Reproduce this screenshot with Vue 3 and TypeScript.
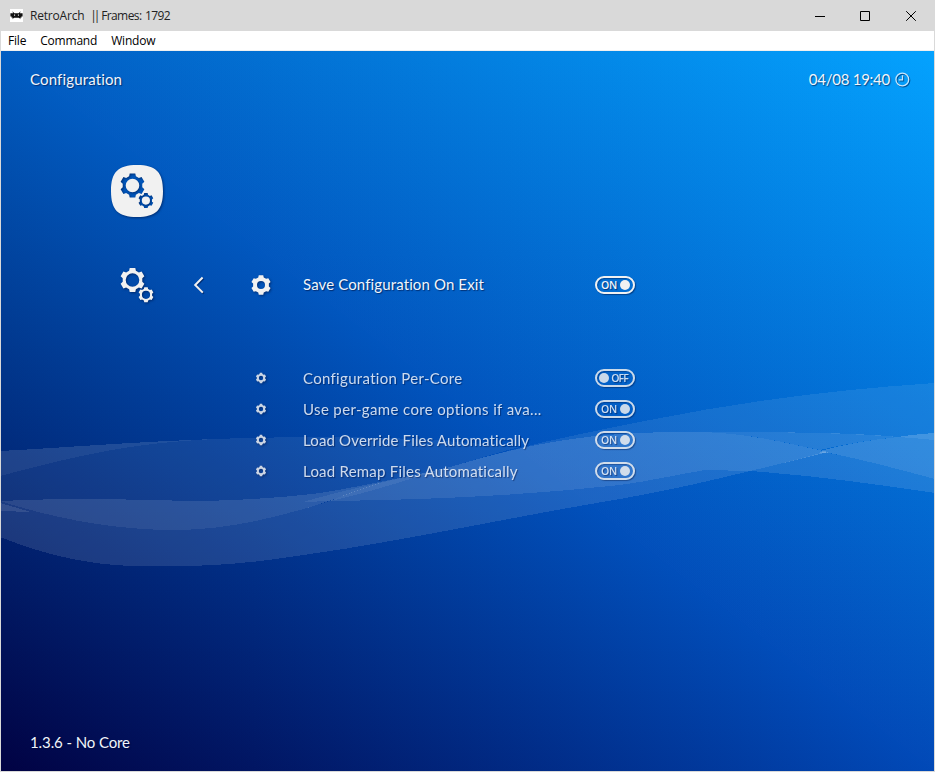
<script setup lang="ts">
interface Setting {
  label: string
  on: boolean
  active?: boolean
  fit: string
}

interface Wave {
  d: string
  alpha: number
}

const menus: string[] = ['File', 'Command', 'Window']

const settings: Setting[] = [
  { label: 'Save Configuration On Exit', on: true, active: true, fit: 'fit-save' },
  { label: 'Configuration Per-Core', on: false, fit: 'fit-core' },
  { label: 'Use per-game core options if ava...', on: true, fit: 'fit-game' },
  { label: 'Load Override Files Automatically', on: true, fit: 'fit-override' },
  { label: 'Load Remap Files Automatically', on: true, fit: 'fit-remap' },
]

/* Six-toothed cog with a round hole, drawn with the even-odd rule. */
function gear(cx: number, cy: number, outer: number, hole: number): string {
  const root = outer * 0.8
  const pts: string[] = []
  for (let i = 0; i < 6; i++) {
    const mid = -90 + i * 60
    const corners: [number, number][] = [
      [mid - 20, root],
      [mid - 13, outer],
      [mid + 13, outer],
      [mid + 20, root],
    ]
    for (const [deg, r] of corners) {
      const a = (deg * Math.PI) / 180
      pts.push(`${(cx + r * Math.cos(a)).toFixed(2)} ${(cy + r * Math.sin(a)).toFixed(2)}`)
    }
  }
  const ring = `M${cx - hole} ${cy}a${hole} ${hole} 0 1 0 ${hole * 2} 0a${hole} ${hole} 0 1 0 ${-hole * 2} 0Z`
  return `M${pts.join('L')}Z${ring}`
}

const tile =
  'M27 1C46 1 53 8 53 27C53 46 46 53 27 53C8 53 1 46 1 27C1 8 8 1 27 1Z'

/* Ribbon pieces, in window coordinates. */
const waves: Wave[] = [
  { alpha: 0.12, d: 'M0 451C60 448 130 442 215 439C130 443 80 455 0 476Z' },
  {
    alpha: 0.07,
    d: 'M0 476C80 455 130 443 215 439C300 436 400 436 470 443C500 446 510 448 520 447C495 453 475 460 450 467C430 472 410 476 390 480C370 484 345 489 320 493C280 498 230 501 190 501C120 499 60 498 0 501Z',
  },
  {
    alpha: 0.17,
    d: 'M0 501C60 498 120 499 190 501C230 501 280 498 320 493C345 489 370 484 390 480C350 492 330 502 300 510C260 521 220 530 175 530C110 530 50 517 0 501Z',
  },
  { alpha: 0.1, d: 'M0 503L31 512L0 511Z' },
  {
    alpha: 0.11,
    d: 'M0 501C50 517 110 530 175 530C220 530 260 521 300 510C310 507 320 504 330 501C430 500 530 495 620 485C650 481 680 474 705 470L750 471C700 483 680 488 620 499C500 519 400 542 290 557C230 566 190 567 130 566C90 564 50 557 0 537Z',
  },
  {
    alpha: 0.19,
    d: 'M330 501C350 492 370 486 390 480C410 476 430 472 450 467C510 449 560 438 620 434C650 432 675 432 700 432C750 433 790 444 828 452C800 459 780 464 750 471L705 470C680 474 650 481 620 485C530 495 430 500 330 501Z',
  },
  { alpha: 0.07, d: 'M303 502C340 491 380 483 450 467C400 482 360 495 330 501Z' },
  {
    alpha: 0.08,
    d: 'M450 467C530 443 590 432 650 420C740 402 830 390 935 383L935 440C860 433 800 432 700 432C675 432 650 432 620 434C560 438 510 449 450 467Z',
  },
  { alpha: 0.14, d: 'M700 432C800 432 860 433 898 437C870 440 850 443 820 450C790 444 750 433 700 432Z' },
  { alpha: 0.19, d: 'M820 451C845 444 870 440 898 437C910 435 920 434 935 433L935 479C890 467 860 459 820 451Z' },
  {
    alpha: 0.11,
    d: 'M750 471C780 464 800 459 824 452C860 459 890 467 935 479L935 493C880 485 820 476 750 471Z',
  },
]
</script>

<template>
  <div class="window">
    <header class="titlebar">
      <svg class="app-icon" width="13" height="13" viewBox="0 0 13 13">
        <rect width="13" height="13" fill="#fff" />
        <path
          d="M2.3 2.3L4.4 4.2H8.6L10.7 2.3L9.9 4.3H12.6V7.5H11.4V8.7H9.9L11 10.2L8.7 8.8H4.3L2 10.2L3.1 8.7H1.6V7.5H.4V4.3H3.1Z"
          fill="#111"
        />
        <path d="M4 5.6h1.1v1.1H4zM7.9 5.6h1.1v1.1H7.9z" fill="#ddd" />
      </svg>
      <span>RetroArch</span>
      <span class="title-bars">||</span>
      <span class="title-frames">Frames: 1792</span>
      <div class="controls">
        <svg width="10" height="10" viewBox="0 0 10 10"><path d="M0 5.5H10" /></svg>
        <svg width="10" height="10" viewBox="0 0 10 10"><path d="M.5 .5H9.5V9.5H.5Z" /></svg>
        <svg width="10" height="10" viewBox="0 0 10 10"><path d="M.2 .2L9.8 9.8M9.8 .2L.2 9.8" /></svg>
      </div>
    </header>

    <nav class="menubar">
      <span v-for="menu in menus" :key="menu">{{ menu }}</span>
    </nav>

    <section class="screen">
      <svg class="backdrop" width="933" height="720" viewBox="1 51 933 720">
        <defs>
          <linearGradient id="lowX" x1="0" y1="0" x2="1" y2="0">
            <stop offset="0" stop-color="#000" />
            <stop offset="1" stop-color="rgb(0,71,116)" />
          </linearGradient>
          <linearGradient id="lowY" x1="0" y1="1" x2="0" y2="0">
            <stop offset="0" stop-color="#000" />
            <stop offset="1" stop-color="rgb(0,91,127)" />
          </linearGradient>
          <linearGradient id="highX" x1="0" y1="0" x2="1" y2="0">
            <stop offset="0" stop-color="#000" />
            <stop offset="1" stop-color="rgb(2,69,60)" />
          </linearGradient>
          <linearGradient id="highY" x1="0" y1="1" x2="0" y2="0">
            <stop offset="0" stop-color="#000" />
            <stop offset="1" stop-color="rgb(2,89,71)" />
          </linearGradient>
          <clipPath id="upper"><path d="M1 51H934V771Z" /></clipPath>
        </defs>
        <g class="blend">
          <rect x="1" y="51" width="933" height="720" fill="rgb(1,2,67)" />
          <rect class="add" x="1" y="51" width="933" height="720" fill="url(#lowX)" />
          <rect class="add" x="1" y="51" width="933" height="720" fill="url(#lowY)" />
        </g>
        <g class="blend" clip-path="url(#upper)">
          <rect x="1" y="51" width="933" height="720" fill="rgb(0,4,123)" />
          <rect class="add" x="1" y="51" width="933" height="720" fill="url(#highX)" />
          <rect class="add" x="1" y="51" width="933" height="720" fill="url(#highY)" />
        </g>
        <g shape-rendering="crispEdges">
          <path v-for="(wave, i) in waves" :key="i" :d="wave.d" fill="#fff" :fill-opacity="wave.alpha" />
        </g>
        <path d="M820 452.5H828" stroke="#fff" stroke-opacity=".2" />
      </svg>

      <div class="topline">
        <span class="fit-title">Configuration</span>
        <div class="clock">
          <span class="fit-time">04/08 19:40</span>
          <svg width="16" height="16" viewBox="0 0 16 16">
            <circle cx="8.3" cy="8.5" r="6.4" />
            <path d="M8.5 4.3V8.8H4.8" />
          </svg>
        </div>
      </div>

      <div class="main">
        <div class="categories">
          <div class="category">
            <svg width="54" height="54" viewBox="0 0 54 54">
              <path
                fill-rule="evenodd"
                :d="tile + gear(22.5, 21.5, 12.4, 6.8) + gear(35.9, 36.6, 7.7, 4.1)"
              />
            </svg>
          </div>
          <div class="category">
            <svg width="54" height="54" viewBox="0 0 54 54">
              <path fill-rule="evenodd" :d="gear(22.5, 22, 12.4, 6.8) + gear(36, 36.8, 7.7, 4.1)" />
            </svg>
          </div>
        </div>

        <div class="back">
          <svg width="16" height="20" viewBox="0 0 16 20"><path d="M11.6 2.5L4.2 10L11.8 17.6" /></svg>
        </div>

        <div class="list">
          <div v-for="item in settings" :key="item.label" class="row" :class="{ active: item.active }">
            <svg class="row-icon" width="24" height="24" viewBox="0 0 24 24">
              <path fill-rule="evenodd" :d="item.active ? gear(12, 12, 10, 4) : gear(12, 12, 5.3, 2.2)" />
            </svg>
            <span class="label" :class="item.fit">{{ item.label }}</span>
            <div class="toggle" :class="{ off: !item.on }">
              <span>{{ item.on ? 'ON' : 'OFF' }}</span>
              <i class="knob"></i>
            </div>
          </div>
        </div>
      </div>

      <div class="status"><span class="fit-status">1.3.6 - No Core</span></div>
    </section>
  </div>
</template>

<style>
body {
  margin: 0;
  overflow: hidden;
}
</style>

<style scoped>
.window {
  box-sizing: border-box;
  display: flex;
  flex-direction: column;
  width: 935px;
  height: 772px;
  background: #d9d9d9;
  font-family: 'Open Sans', 'Noto Sans', sans-serif;
  font-size: 12px;
}

.titlebar {
  display: flex;
  align-items: center;
  height: 31px;
  padding: 0 19px 0 10px;
  color: #222;
  letter-spacing: -0.2px;
}

.app-icon {
  margin-right: 7px;
}

.title-bars {
  margin-left: 6px;
  letter-spacing: -3.2px;
}

.title-frames {
  margin-left: 4px;
  letter-spacing: -0.6px;
  word-spacing: 1px;
}

.controls {
  display: flex;
  gap: 35px;
  margin-left: auto;
}

.controls svg {
  fill: none;
  stroke: #000;
}

.controls svg:last-child {
  margin-left: 1px;
}

.menubar {
  box-sizing: border-box;
  display: flex;
  align-items: center;
  gap: 14px;
  height: 20px;
  margin: 0 1px;
  padding-left: 7px;
  border-bottom: 1px solid #f0f0f0;
  background: #fff;
  color: #000;
  letter-spacing: -0.2px;
}

.screen {
  position: relative;
  display: flex;
  flex-direction: column;
  width: 933px;
  height: 720px;
  margin-left: 1px;
  color: #f1f5fb;
  font-family: Lato, sans-serif;
  font-size: 15px;
  text-shadow: 1px 1px 1px rgba(0, 10, 50, 0.55);
}

.backdrop {
  position: absolute;
  inset: 0;
}

.blend {
  isolation: isolate;
}

.add {
  mix-blend-mode: plus-lighter;
}

.topline {
  position: relative;
  display: flex;
  align-items: center;
  justify-content: space-between;
  height: 56px;
  padding: 0 24px 2px 29px;
}

.clock {
  display: flex;
  align-items: center;
  gap: 4px;
}

.clock svg,
.back svg {
  fill: none;
  stroke: #c8e6fb;
  stroke-width: 1.3;
  filter: drop-shadow(1px 1px 0.5px rgba(0, 10, 50, 0.5));
}

.back svg {
  stroke: #f1f1f1;
  stroke-width: 2;
}

.main {
  position: relative;
  display: flex;
  flex: 1;
  align-items: flex-start;
  padding-left: 109px;
}

.categories {
  margin-top: 35px;
}

.category,
.back {
  display: flex;
  align-items: center;
  height: 94px;
}

.category svg,
.row-icon {
  fill: #f1f1f1;
  filter: drop-shadow(1px 1px 1px rgba(0, 10, 50, 0.5));
}

.back {
  margin: 129px 42px 0 27px;
}

.list {
  margin-top: 129px;
}

.row {
  display: grid;
  grid-template-columns: 54px 292px 40px;
  align-items: center;
  height: 31px;
  opacity: 0.84;
}

.row.active {
  height: 94px;
  margin-bottom: 30px;
  opacity: 1;
}

.label {
  white-space: nowrap;
}

.row.active .label {
  padding-bottom: 2px;
}

.toggle {
  box-sizing: border-box;
  display: flex;
  align-items: center;
  justify-content: space-between;
  width: 40px;
  height: 18px;
  padding: 0 3px 0 4px;
  border: 2px solid #f1f1f1;
  border-radius: 9px;
  box-shadow: 1px 1px 1px rgba(0, 10, 50, 0.45), inset 1px 1px 1px rgba(0, 10, 50, 0.35);
  font-family: 'Open Sans', sans-serif;
  font-size: 10.5px;
  font-weight: 600;
  letter-spacing: -0.2px;
  line-height: 14px;
}

.toggle.off {
  flex-direction: row-reverse;
  padding: 0 5px 0 2px;
  letter-spacing: -0.9px;
}

.knob {
  width: 10px;
  height: 10px;
  border-radius: 50%;
  background: #f1f1f1;
}

.status {
  position: relative;
  display: flex;
  align-items: center;
  height: 58px;
  padding-left: 29px;
}

.fit-title,
.fit-override {
  letter-spacing: 0.15px;
}

.fit-save {
  letter-spacing: 0.12px;
}

.fit-time {
  letter-spacing: -0.25px;
}

.fit-core {
  letter-spacing: 0.31px;
}

.fit-game {
  letter-spacing: 0.36px;
}

.fit-remap {
  letter-spacing: 0.23px;
}

.fit-status {
  letter-spacing: -0.1px;
}
</style>
